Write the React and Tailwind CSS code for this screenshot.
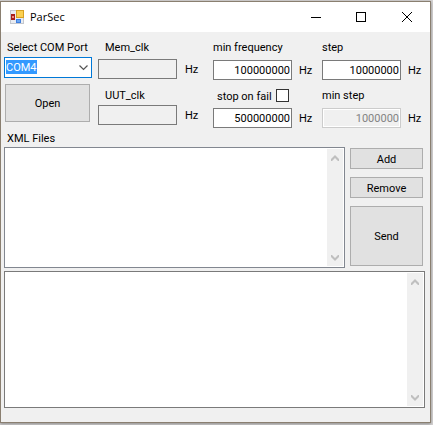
import React from "react";

const fieldBase =
  "block h-5 w-full min-w-0 flex-1 rounded-none border px-px text-right outline-none";

const fieldTones = {
  normal: "border-[#7a7a7a] bg-white text-black",
  readonly: "border-[#7a7a7a] bg-[#f0f0f0] text-black",
  disabled: "border-[#cccccc] bg-[#f0f0f0] text-[#838383] shadow-[inset_0_0_0_1px_#fff]",
};

function HzField({ id, label, value, tone = "normal", gap = "gap-[7px]" }) {
  return (
    <div className={`flex items-center ${gap}`}>
      <input
        id={id}
        aria-label={label}
        type="text"
        defaultValue={value}
        readOnly={tone === "readonly"}
        disabled={tone === "disabled"}
        className={`${fieldBase} ${fieldTones[tone]}`}
      />
      <span className="w-[13px] shrink-0 pt-[2px]">Hz</span>
    </div>
  );
}

function Chevron({ up }) {
  return (
    <svg viewBox="0 0 8 6" className="h-[6px] w-2" fill="#bfbfbf">
      {up ? (
        <path d="M4 0 8 4v2H7L4 3 1 6H0V4z" />
      ) : (
        <path d="M4 6 0 2V0h1l3 3 3-3h1v2z" />
      )}
    </svg>
  );
}

function ScrollTrack() {
  return (
    <div className="my-px mr-px flex w-4 shrink-0 flex-col items-center justify-between bg-[#f0f0f0] pt-[6px] pb-[5px]">
      <Chevron up />
      <Chevron />
    </div>
  );
}

function PushButton({ children, className }) {
  return (
    <button
      type="button"
      className={`block w-full border border-[#adadad] bg-[#e1e1e1] pt-[2px] text-center ${className}`}
    >
      {children}
    </button>
  );
}

function AppIcon() {
  return (
    <svg viewBox="0 0 14 14" className="h-[14px] w-[14px]">
      <rect x="0.5" y="0.5" width="13" height="13" fill="#e9ecf1" stroke="#c3c7ce" />
      <rect x="1" y="4" width="4" height="6" fill="#a8201a" />
      <rect x="2" y="6" width="2" height="2" fill="#ef8c80" />
      <rect x="6" y="0" width="8" height="8" fill="#d8a020" />
      <rect x="7" y="1" width="6" height="6" fill="#fbd050" />
      <rect x="6" y="9" width="5" height="4" fill="#3f7fe0" />
      <rect x="7" y="10" width="3" height="2" fill="#6aa6f2" />
    </svg>
  );
}

function TitleBar() {
  return (
    <header className="flex h-[30px] items-center bg-white pl-[9px]">
      <AppIcon />
      <h1 className="ml-[6px] flex-1 font-['Open_Sans',sans-serif] text-[11px] leading-4">ParSec</h1>
      <button type="button" aria-label="Minimize" className="flex h-full w-[45px] items-center justify-center">
        <svg viewBox="0 0 10 10" className="size-[10px]" shapeRendering="crispEdges">
          <path d="M0 5.5h10" stroke="#000" />
        </svg>
      </button>
      <button type="button" aria-label="Maximize" className="flex h-full w-[46px] items-center justify-center">
        <svg viewBox="0 0 10 10" className="size-[10px]" fill="none" shapeRendering="crispEdges">
          <rect x="0.5" y="0.5" width="9" height="9" stroke="#000" />
        </svg>
      </button>
      <button type="button" aria-label="Close" className="flex h-full w-[46px] items-center justify-center">
        <svg viewBox="0 0 10 10" className="size-[10px]" fill="none">
          <path d="M0 0l10 10M10 0L0 10" stroke="#000" />
        </svg>
      </button>
    </header>
  );
}

export default function App() {
  return (
    <div className="min-h-screen bg-[#d6d4d4] pt-px pr-[2px]">
      <main className="border border-[#8a7f70] bg-[#f0f0f0] font-[Roboto,Arial,sans-serif] text-[11px] leading-[14px] text-black shadow-[0_1px_3px_#888]">
        <TitleBar />
        <div className="pr-[5px] pb-[14px] pl-[3px]">
          <div className="grid grid-cols-[94fr_115fr_109fr_103fr] pt-[9px]">
            <div className="min-w-0 pr-[6px]">
              <label htmlFor="port" className="block pl-[3px] whitespace-nowrap">
                Select COM Port
              </label>
              <div className="relative mt-[2px]">
                <select
                  id="port"
                  className="block h-[21px] w-full appearance-none rounded-none border border-[#0078d7] bg-white bg-[linear-gradient(#3399ff,#3399ff)] bg-[length:31px_14px] bg-[position:1px_2px] bg-no-repeat pl-px text-white outline-none"
                >
                  <option>COM4</option>
                </select>
                <svg
                  viewBox="0 0 9 6"
                  className="pointer-events-none absolute top-2 right-1 h-[6px] w-[9px]"
                  fill="none"
                >
                  <path d="M0.5 0.5l4 4 4-4" stroke="#555" strokeWidth="1.2" />
                </svg>
              </div>
              <div className="mt-[6px] pr-[2px] pl-px">
                <PushButton className="h-[38px]">Open</PushButton>
              </div>
            </div>

            <div className="min-w-0 pr-[15px]">
              <label htmlFor="mem" className="mb-1 block pl-[7px]">
                Mem_clk
              </label>
              <HzField id="mem" label="Mem_clk" value="" tone="readonly" gap="gap-2" />
              <label htmlFor="uut" className="mt-[10px] mb-[2px] block pl-[7px]">
                UUT_clk
              </label>
              <HzField id="uut" label="UUT_clk" value="" tone="readonly" gap="gap-2" />
            </div>

            <div className="min-w-0 pr-[10px]">
              <label htmlFor="minfreq" className="mb-[5px] block whitespace-nowrap">
                min frequency
              </label>
              <HzField id="minfreq" label="min frequency" value="100000000" />
              <div className="mt-[9px] mb-[5px] flex h-[14px] items-start pr-[20px] pl-1">
                <label htmlFor="stop" className="flex-1 pt-px whitespace-nowrap">
                  stop on fail
                </label>
                <input
                  id="stop"
                  type="checkbox"
                  className="mr-[3px] size-[13px] shrink-0 appearance-none border border-[#333] bg-white checked:bg-[#0078d7]"
                />
              </div>
              <HzField id="maxfreq" label="max frequency" value="500000000" />
            </div>

            <div className="min-w-0 pr-1">
              <label htmlFor="step" className="mb-[5px] block">
                step
              </label>
              <HzField id="step" label="step" value="10000000" />
              <label htmlFor="minstep" className="mt-[9px] mb-[5px] block">
                min step
              </label>
              <HzField id="minstep" label="min step" value="1000000" tone="disabled" />
            </div>
          </div>

          <label htmlFor="files" className="mt-1 mb-px block pl-[3px]">
            XML Files
          </label>
          <div className="flex gap-[5px]">
            <div className="flex h-[121px] min-w-0 flex-1 border border-[#828790] bg-white">
              <select
                id="files"
                multiple
                className="min-w-0 flex-1 appearance-none overflow-hidden bg-white outline-none"
              />
              <ScrollTrack />
            </div>
            <div className="mr-[2px] flex w-[73px] shrink-0 flex-col gap-2 pt-px">
              <PushButton className="h-[21px]">Add</PushButton>
              <PushButton className="h-[21px]">Remove</PushButton>
              <PushButton className="h-[60px]">Send</PushButton>
            </div>
          </div>

          <div className="mt-[3px] flex h-[137px] border border-[#7a7a7a] bg-white">
            <textarea
              aria-label="Log"
              className="min-w-0 flex-1 resize-none overflow-hidden bg-white outline-none"
            />
            <ScrollTrack />
          </div>
        </div>
      </main>
    </div>
  );
}
